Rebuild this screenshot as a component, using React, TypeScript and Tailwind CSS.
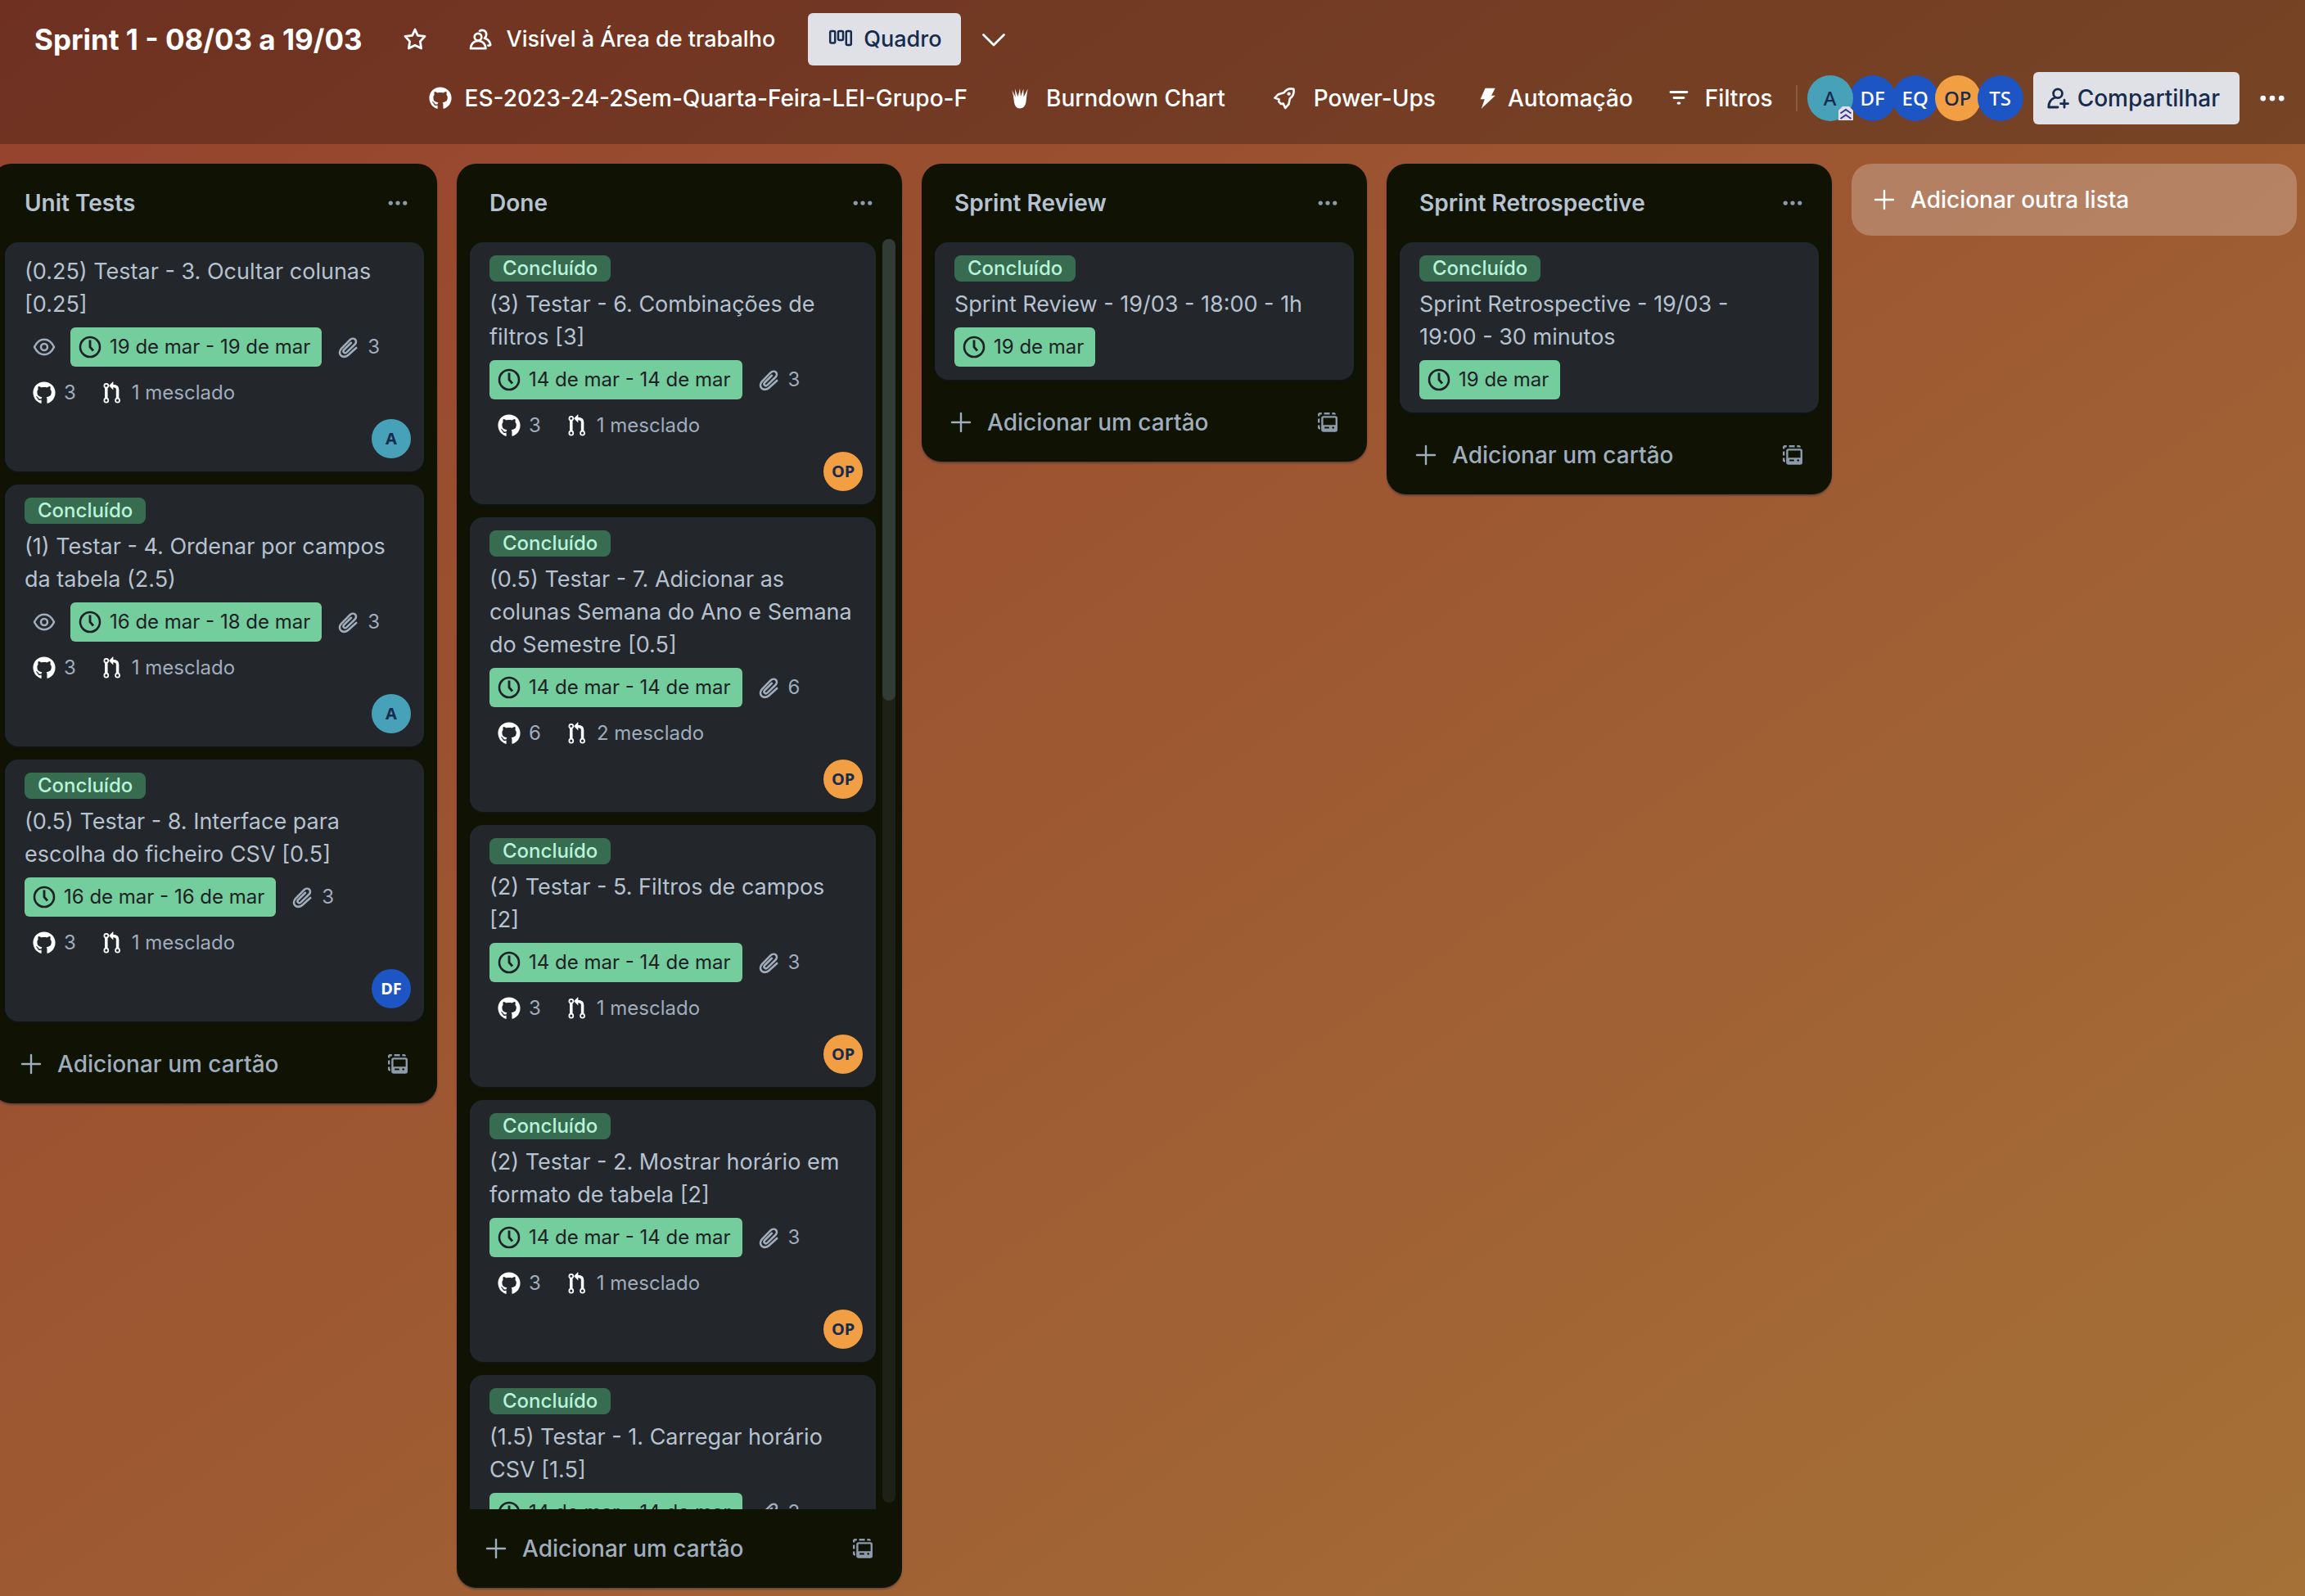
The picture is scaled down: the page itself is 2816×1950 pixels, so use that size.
import React from "react";
import { FaGithub } from "react-icons/fa";

type IconProps = { className?: string };

const Dots = ({ className = "" }: IconProps) => (
  <svg viewBox="0 0 32 32" className={className} fill="currentColor" aria-hidden="true">
    <circle cx="6" cy="16" r="3" />
    <circle cx="16" cy="16" r="3" />
    <circle cx="26" cy="16" r="3" />
  </svg>
);

const Plus = ({ className = "" }: IconProps) => (
  <svg viewBox="0 0 32 32" className={className} fill="none" stroke="currentColor" strokeWidth="2.4" strokeLinecap="round" aria-hidden="true">
    <path d="M16 5v22M5 16h22" />
  </svg>
);

const Star = ({ className = "" }: IconProps) => (
  <svg viewBox="0 0 32 32" className={className} fill="none" stroke="currentColor" strokeWidth="2.8" strokeLinejoin="round" aria-hidden="true">
    <path d="M16 4 19.300 11.400 28 12.400 22.400 18.600 23.600 27 16 23.200 8.400 27 9.600 18.600 4 12.400 12.700 11.400z" />
  </svg>
);

const People = ({ className = "" }: IconProps) => (
  <svg viewBox="0 0 32 32" className={className} fill="none" stroke="currentColor" strokeWidth="2.700" strokeLinejoin="round" strokeLinecap="round" aria-hidden="true">
    <circle cx="13" cy="13.200" r="4.300" />
    <path d="M4 27.200c0-5 3.400-9.200 9.200-9.200s9.200 4.200 9.200 9.200z" />
    <path d="M15 5.800c3-2.200 8-.6 8.200 4 .1 2-.8 3.800-2.200 5 4 1.200 6.600 4 7.200 8-.8.8-1.800 1-2.800.8" />
  </svg>
);

const BoardIcon = ({ className = "" }: IconProps) => (
  <svg viewBox="0 0 32 32" className={className} fill="none" stroke="currentColor" strokeWidth="2.500" aria-hidden="true">
    <rect x="3.200" y="6" width="6" height="14.500" rx="1.500" />
    <rect x="13" y="6" width="6" height="11" rx="1.500" />
    <rect x="22.800" y="6" width="6" height="17" rx="1.500" />
  </svg>
);

const Chevron = ({ className = "" }: IconProps) => (
  <svg viewBox="0 0 32 32" className={className} fill="none" stroke="currentColor" strokeWidth="2.800" strokeLinecap="round" strokeLinejoin="round" aria-hidden="true">
    <path d="M3.500 10.500 16 23 28.500 10.500" />
  </svg>
);

const Flame = ({ className = "" }: IconProps) => (
  <svg viewBox="0 0 32 32" className={className} fill="currentColor" aria-hidden="true">
    <path d="M6.300 6 10.600 14.500 10 4.500 13.600 14 16 4 17 14 20.300 4.500 20.600 14.500 25.700 4.500C24.600 10 24.200 14 23.600 19.500c-.6 6-3.600 9-7.600 9s-6.600-3-7.200-9C8.300 14 7.400 10 6.300 6z" />
  </svg>
);

const Rocket = ({ className = "" }: IconProps) => (
  <svg viewBox="0 0 32 32" className={className} fill="none" stroke="currentColor" strokeWidth="2.600" strokeLinejoin="round" strokeLinecap="round" aria-hidden="true">
    <path d="M27.400 4.700C22.500 3.600 18.600 5.200 15.500 9.200L8.800 11.200 4.400 15.600 9.600 17.400 9.200 20.200 12 23 14.800 22.600 17.200 28 21.400 23.400 22.800 16.600C26.800 13.400 28.400 9.500 27.400 4.700z" />
    <circle cx="21.600" cy="10.600" r="1.200" strokeWidth="2" />
  </svg>
);

const Bolt = ({ className = "" }: IconProps) => (
  <svg viewBox="0 0 32 32" className={className} fill="currentColor" aria-hidden="true">
    <path d="M12.500 3.800h12.200L20 12.800h4.800L7.800 28.800l4-11.500H6.500z" />
  </svg>
);

const Filter = ({ className = "" }: IconProps) => (
  <svg viewBox="0 0 32 32" className={className} fill="none" stroke="currentColor" strokeWidth="2.800" strokeLinecap="round" aria-hidden="true">
    <path d="M6 8.500h20M10 15.500h12" />
    <path d="M15.200 22h1.600" strokeWidth="3.200" />
  </svg>
);

const Invite = ({ className = "" }: IconProps) => (
  <svg viewBox="0 0 32 32" className={className} fill="none" stroke="currentColor" strokeWidth="2.800" strokeLinecap="round" strokeLinejoin="round" aria-hidden="true">
    <circle cx="16" cy="10.200" r="5.400" />
    <path d="M12.500 15.200C7.500 17 4.800 21.500 4.800 27H16M24 18.200v9M19.500 22.700h9" />
  </svg>
);

const Eye = ({ className = "" }: IconProps) => (
  <svg viewBox="0 0 32 32" className={className} fill="none" stroke="currentColor" strokeWidth="2.600" aria-hidden="true">
    <path d="M4 16c2.800-5.800 7-9.200 12-9.200s9.200 3.400 12 9.200c-2.800 5.800-7 9.200-12 9.200S6.800 21.800 4 16z" strokeLinejoin="round" />
    <circle cx="16" cy="16" r="4" />
  </svg>
);

const Clock = ({ className = "" }: IconProps) => (
  <svg viewBox="0 0 32 32" className={className} fill="none" stroke="currentColor" strokeWidth="2.600" aria-hidden="true">
    <circle cx="16" cy="16" r="12" />
    <path d="M16 7.500V16l4 4.500" strokeWidth="2.800" />
  </svg>
);

const Clip = ({ className = "" }: IconProps) => (
  <svg viewBox="0 0 32 32" className={className} fill="none" stroke="currentColor" strokeWidth="2.600" strokeLinecap="round" aria-hidden="true">
    <path d="M26.200 17 16.500 25.800c-2.800 2.600-6.800 2.800-9 .6s-2-6 .6-8.600L18.600 7.200c1.900-1.800 4.700-2 6.300-.5s1.400 4.200-.4 6.100L14.600 22.400c-1.100 1-2.700 1.100-3.500.3s-.7-2.400.3-3.500l8.600-8.400" />
  </svg>
);

const PullRequest = ({ className = "" }: IconProps) => (
  <svg viewBox="0 0 32 32" className={className} fill="none" stroke="currentColor" aria-hidden="true">
    <g strokeWidth="2">
      <circle cx="7.800" cy="6" r="2.800" />
      <circle cx="7.800" cy="26.500" r="2.800" />
      <circle cx="23.500" cy="26.500" r="2.800" />
    </g>
    <path d="M7.800 9v14.500M23.500 23.500V11.500c0-3.500-2-5.200-6.500-5.200" strokeWidth="4" />
    <path d="M17.500 0v12L11.500 6z" fill="currentColor" stroke="none" />
  </svg>
);

const Template = ({ className = "" }: IconProps) => (
  <svg viewBox="0 0 32 32" className={className} aria-hidden="true">
    <g fill="none" stroke="currentColor" strokeWidth="2.400">
      <path d="M5.200 8.600V6.600c0-.8.600-1.400 1.400-1.400h2.200M11.600 5.200h7M21.400 5.200h2c.8 0 1.400.6 1.400 1.400M5.200 11.600v5M5.200 19.600v3.200c0 .4.400.6.800.6h1" />
      <rect x="9.400" y="9.400" width="17.400" height="17.200" rx="1.600" />
    </g>
    <path fillRule="evenodd" fill="currentColor" d="M9 19.200h18v7H9zm3.200 2.400v2h5.600v-2zm9.200 0v2h2.600v-2z" />
  </svg>
);

const Premium = ({ className = "" }: IconProps) => (
  <svg viewBox="0 0 18 18" className={className} aria-hidden="true">
    <path d="M0 5 5 0h8l5 5v12H0z" fill="#dfe1e6" />
    <path d="M2.500 8.500 9 4l6.500 4.500M2.500 15 9 10.500l6.500 4.500" fill="none" stroke="#403294" strokeWidth="2" />
  </svg>
);

type Person = "A" | "DF" | "EQ" | "OP" | "TS";

const personStyle: Record<Person, string> = {
  A: "bg-[#47a1b9] text-[#172b4d]",
  DF: "bg-[#1d55c4] text-white",
  EQ: "bg-[#1d55c4] text-white",
  OP: "bg-[#f29e42] text-[#172b4d]",
  TS: "bg-[#1d55c4] text-white",
};

type CardData = {
  title: string;
  done?: boolean;
  watching?: boolean;
  date: string;
  files?: number;
  commits?: number;
  merged?: number;
  person?: Person;
};

type ListData = { name: string; cards: CardData[]; scrolls?: boolean };

const lists: ListData[] = [
  {
    name: "Unit Tests",
    cards: [
      { title: "(0.25) Testar - 3. Ocultar colunas [0.25]", watching: true, date: "19 de mar - 19 de mar", files: 3, commits: 3, merged: 1, person: "A" },
      { title: "(1) Testar - 4. Ordenar por campos da tabela (2.5)", done: true, watching: true, date: "16 de mar - 18 de mar", files: 3, commits: 3, merged: 1, person: "A" },
      { title: "(0.5) Testar - 8. Interface para escolha do ficheiro CSV [0.5]", done: true, date: "16 de mar - 16 de mar", files: 3, commits: 3, merged: 1, person: "DF" },
    ],
  },
  {
    name: "Done",
    scrolls: true,
    cards: [
      { title: "(3) Testar - 6. Combinações de filtros [3]", done: true, date: "14 de mar - 14 de mar", files: 3, commits: 3, merged: 1, person: "OP" },
      { title: "(0.5) Testar - 7. Adicionar as colunas Semana do Ano e Semana do Semestre [0.5]", done: true, date: "14 de mar - 14 de mar", files: 6, commits: 6, merged: 2, person: "OP" },
      { title: "(2) Testar - 5. Filtros de campos [2]", done: true, date: "14 de mar - 14 de mar", files: 3, commits: 3, merged: 1, person: "OP" },
      { title: "(2) Testar - 2. Mostrar horário em formato de tabela [2]", done: true, date: "14 de mar - 14 de mar", files: 3, commits: 3, merged: 1, person: "OP" },
      { title: "(1.5) Testar - 1. Carregar horário CSV [1.5]", done: true, date: "14 de mar - 14 de mar", files: 3 },
    ],
  },
  {
    name: "Sprint Review",
    cards: [{ title: "Sprint Review - 19/03 - 18:00 - 1h", done: true, date: "19 de mar" }],
  },
  {
    name: "Sprint Retrospective",
    cards: [{ title: "Sprint Retrospective - 19/03 -\n19:00 - 30 minutos", done: true, date: "19 de mar" }],
  },
];

function Card({ card }: { card: CardData }) {
  return (
    <li className="shrink-0 rounded-2xl bg-[#23262b] px-6 py-4 shadow-[0_2px_2px_#091e4240]">
      {card.done && (
        <div className="mb-2 flex">
          <span className="h-8 rounded-lg bg-[#376c50] px-4 text-[24px] leading-8 font-medium text-[#baf3db]">Concluído</span>
        </div>
      )}
      <h3 className="text-[27px] leading-10 whitespace-pre-line text-[#b6c2cf]">{card.title}</h3>
      <div className="mt-2 flex gap-2 text-[24px] leading-[48px] text-[#9fadbc]">
        {card.watching && (
          <span className="flex h-12 w-12 items-center justify-center">
            <Eye className="size-8" />
          </span>
        )}
        <span className="flex h-12 items-center rounded-md bg-[#73cd9c] px-2 text-[#1d2125]">
          <Clock className="size-8" />
          <span className="pr-1.5 pl-2">{card.date}</span>
        </span>
        {card.files && (
          <span className="flex h-12 items-center px-2">
            <Clip className="size-8" />
            <span className="pl-2">{card.files}</span>
          </span>
        )}
      </div>
      {card.person && (
        <>
          <div className="mt-2 flex gap-3 text-[24px] leading-[48px] text-[#9fadbc]">
            <span className="flex h-12 items-center px-2">
              <span className="flex size-8 items-center justify-center">
                <FaGithub className="size-7 text-white" />
              </span>
              <span className="pl-2">{card.commits}</span>
            </span>
            <span className="flex h-12 items-center px-2">
              <PullRequest className="size-8 p-[2px] text-white" />
              <span className="pl-2">{card.merged} mesclado</span>
            </span>
          </div>
          <div className="-mr-2 mt-2 flex justify-end">
            <span className={`flex size-12 items-center justify-center rounded-full font-['Noto_Sans',sans-serif] text-[20px] font-bold ${personStyle[card.person]}`}>
              {card.person}
            </span>
          </div>
        </>
      )}
    </li>
  );
}

function List({ list }: { list: ListData }) {
  return (
    <section className="flex max-h-full w-[544px] shrink-0 flex-col rounded-3xl bg-[#101204] shadow-[0_2px_2px_#091e4260]">
      <header className="flex shrink-0 items-center justify-between pt-4 pr-4 pb-3 pl-10">
        <h2 className="text-[28px] leading-10 font-semibold text-[#b6c2cf]">{list.name}</h2>
        <button type="button" aria-label={`Menu: ${list.name}`} className="flex size-16 items-center justify-center text-[#8c9bab]">
          <Dots className="size-7" />
        </button>
      </header>
      <div className="flex min-h-0">
        <ol className={`flex min-w-0 flex-1 flex-col gap-4 overflow-hidden py-1 pl-4 ${list.scrolls ? "pr-8" : "pr-4"}`}>
          {list.cards.map((card) => (
            <Card key={card.title} card={card} />
          ))}
        </ol>
        {list.scrolls && (
          <div className="-ml-6 mr-2 mb-2 w-4 shrink-0 rounded-full bg-[#1e2118]">
            <div className="h-[36.5%] rounded-full bg-[#323b36]" />
          </div>
        )}
      </div>
      <footer className="flex shrink-0 items-center p-4 text-[#9fadbc]">
        <button type="button" className="flex h-16 flex-1 items-center gap-4 pl-4 text-[28px] font-medium">
          <Plus className="size-8" />
          Adicionar um cartão
        </button>
        <button type="button" aria-label="Criar a partir de modelo" className="flex size-16 items-center justify-center text-[#8c9bab]">
          <Template className="size-8" />
        </button>
      </footer>
    </section>
  );
}

const people: Person[] = ["A", "DF", "EQ", "OP", "TS"];

export default function App() {
  return (
    <div className="flex h-screen flex-col overflow-hidden bg-linear-to-br from-[#95412d] to-[#a57137] font-['Inter','Liberation_Sans',sans-serif]">
      <header className="shrink-0 bg-black/25 pt-4 pb-6 font-medium text-white">
        <div className="flex h-16 items-center pl-[42px] text-[27px]">
          <h1 className="text-[35px] font-bold">Sprint 1 - 08/03 a 19/03</h1>
          <button type="button" aria-label="Favoritar quadro" className="ml-8 flex size-16 items-center justify-center">
            <Star className="size-8" />
          </button>
          <button type="button" className="ml-4 flex h-16 items-center gap-4 px-4">
            <People className="size-8" />
            Visível à Área de trabalho
          </button>
          <button type="button" className="ml-6 flex h-16 items-center gap-3 rounded-md bg-[#dfe1e6] px-6 text-[#172b4d]">
            <BoardIcon className="size-8" />
            Quadro
          </button>
          <button type="button" aria-label="Visualizações" className="ml-2 flex size-16 items-center justify-center">
            <Chevron className="size-8" />
          </button>
        </div>
        <div className="mt-2 flex h-16 items-center justify-end pr-2 text-[28px]">
          <button type="button" className="flex items-center gap-4">
            <FaGithub className="size-7" />
            ES-2023-24-2Sem-Quarta-Feira-LEI-Grupo-F
          </button>
          <button type="button" className="ml-12 flex items-center gap-4">
            <Flame className="size-8" />
            Burndown Chart
          </button>
          <button type="button" className="ml-14 flex items-center gap-5">
            <Rocket className="size-8" />
            Power-Ups
          </button>
          <button type="button" className="ml-12 flex items-center gap-2">
            <Bolt className="size-8" />
            Automação
          </button>
          <button type="button" className="ml-10 flex items-center gap-4">
            <Filter className="size-8" />
            Filtros
          </button>
          <div className="ml-7 h-8 w-0.5 bg-white/15" />
          <ul className="ml-3 flex font-['Noto_Sans',sans-serif]">
            {people.map((p, i) => (
              <li key={p} className={`relative flex size-14 items-center justify-center rounded-full text-[24px] ${i > 0 ? "-ml-1" : "z-10"} ${personStyle[p]}`}>
                {p}
                {p === "A" && <Premium className="absolute right-0 bottom-0 size-[18px]" />}
              </li>
            ))}
          </ul>
          <button type="button" className="ml-3 flex h-16 items-center gap-2 rounded-md bg-[#dfe1e6] pr-6 pl-3.5 text-[#172b4d]">
            <Invite className="size-8" />
            Compartilhar
          </button>
          <button type="button" aria-label="Mostrar menu" className="ml-2 flex size-16 items-center justify-center">
            <Dots className="size-9" />
          </button>
        </div>
      </header>
      <main className="-ml-[10px] flex min-h-0 flex-1 items-start gap-6 pt-6 pb-[10px]">
        {lists.map((list) => (
          <List key={list.name} list={list} />
        ))}
        <button type="button" className="flex h-[88px] w-[544px] shrink-0 items-center gap-4 rounded-3xl bg-white/24 pl-6 text-[28px] font-medium text-white">
          <Plus className="size-8" />
          Adicionar outra lista
        </button>
      </main>
    </div>
  );
}
